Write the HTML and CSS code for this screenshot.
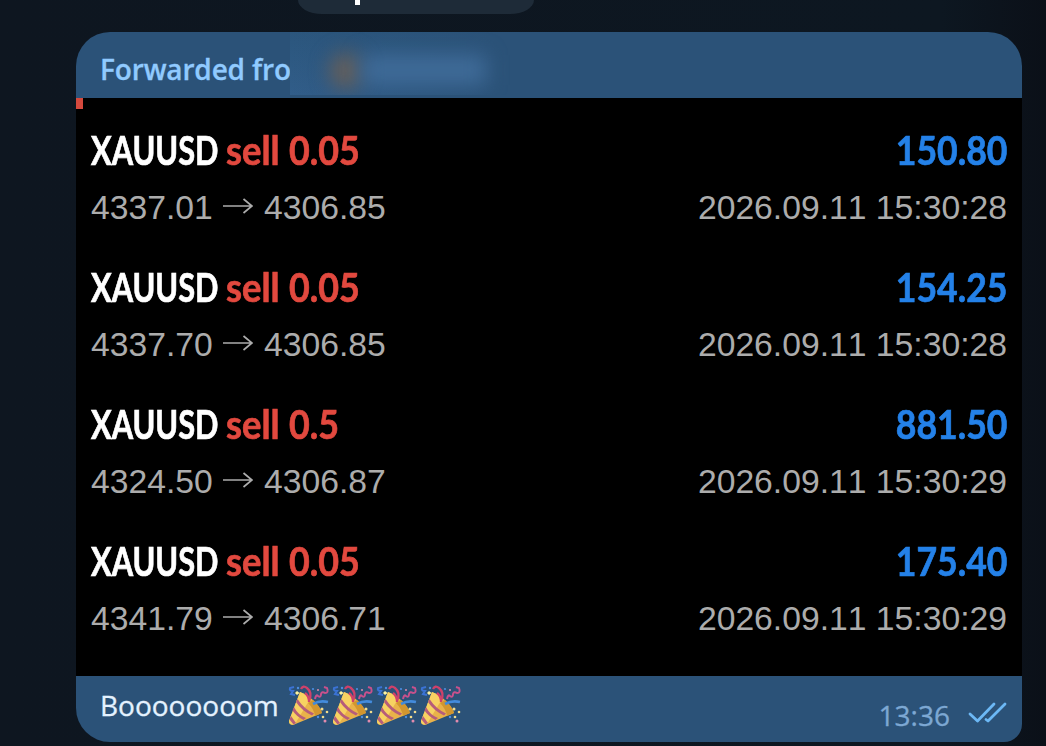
FILE: index.html
```html
<!DOCTYPE html>
<html lang="en">
<head>
    <meta charset="UTF-8">
    <meta name="viewport" content="width=device-width, initial-scale=1.0">
    <title>Chat</title>
    <link rel="stylesheet" href="styles.css">
</head>
<body>
    <!-- shared icons -->
    <svg class="defs" width="0" height="0">
        <symbol id="arrow" viewBox="0 0 30 20">
            <path d="M0 9H28.500M20.500 2L29 9L20.500 16" fill="none" stroke="currentColor" stroke-width="1.700"/>
        </symbol>
        <symbol id="popper" viewBox="0 0 44 44">
            <path d="M12 7Q20 10 26 16Q32 22 34 28L5 40Q1 40 1 36Z" fill="#e9b24a"/>
            <path d="M12 7Q18 9 22 14L7 39Q1 41 1 36Z" fill="#f7d262"/>
            <path d="M25 15Q32 21 34 28L27 31Q26 24 20 18Z" fill="#d2962f"/>
            <path d="M9.500 14Q16 24 26 28.500L24 30.500Q14 26 8 17Z" fill="#b65d7a"/>
            <path d="M6 22Q10 30 18 33L15.500 35Q8 31 4.500 25.500Z" fill="#b65d7a"/>
            <path d="M3 31L8 38L5.500 39.500L1.500 34.500Z" fill="#b65d7a"/>
            <path d="M21 16Q25 8 19 3Q15 0 13 4M21 17Q21 11 17 8" fill="none" stroke="#cf416a" stroke-width="2.300"/>
            <path d="M27 14Q28 9 30 11Q33 13 33 9Q34 6 37 8Q41 8 39 3L36 2" fill="none" stroke="#c8518c" stroke-width="2"/>
            <path d="M25 19Q32 15 40 17" fill="none" stroke="#438bdc" stroke-width="2.600"/>
            <path d="M6 2L2 3Q1 6 5 6L3 9L7 10" fill="none" stroke="#3b73d5" stroke-width="2"/>
            <path d="M9 6L11.500 8L9 10L7 8Z" fill="#fff4a0"/>
            <g fill="#f2dc8c">
                <circle cx="34" cy="24" r="1.500"/>
                <circle cx="39" cy="27" r="1.300"/>
                <circle cx="35" cy="32" r="1.300"/>
            </g>
            <g fill="#e28bad">
                <circle cx="37" cy="36" r="1.500"/>
                <circle cx="30" cy="5" r="1"/>
            </g>
            <g fill="#4c8de0">
                <circle cx="30" cy="32" r="1.200"/>
                <circle cx="10" cy="3" r="1.200"/>
                <circle cx="25" cy="4" r="1.100"/>
            </g>
        </symbol>
    </svg>

    <div class="chat">
        <div class="date-pill"><span class="date-tail"></span></div>

        <div class="message">
            <div class="forwarded">
                <span class="forwarded-label">Forwarded fro</span>
                <div class="hidden-name">
                    <div class="blur-avatar"></div>
                    <div class="blur-name"></div>
                </div>
            </div>

            <div class="trades">
                <div class="marker"></div>
                <div class="trade">
                    <div class="row top">
                        <div class="order"><span class="symbol">XAUUSD</span><span class="side">sell</span><span class="lot">0.05</span></div>
                        <span class="profit">150.80</span>
                    </div>
                    <div class="row bottom">
                        <div class="prices"><span class="open">4337.01</span><svg class="arrow"><use href="#arrow"/></svg><span>4306.85</span></div>
                        <span class="date">2026.09.11 15:30:28</span>
                    </div>
                </div>
                <div class="trade">
                    <div class="row top">
                        <div class="order"><span class="symbol">XAUUSD</span><span class="side">sell</span><span class="lot">0.05</span></div>
                        <span class="profit">154.25</span>
                    </div>
                    <div class="row bottom">
                        <div class="prices"><span class="open">4337.70</span><svg class="arrow"><use href="#arrow"/></svg><span>4306.85</span></div>
                        <span class="date">2026.09.11 15:30:28</span>
                    </div>
                </div>
                <div class="trade">
                    <div class="row top">
                        <div class="order"><span class="symbol">XAUUSD</span><span class="side">sell</span><span class="lot">0.5</span></div>
                        <span class="profit">881.50</span>
                    </div>
                    <div class="row bottom">
                        <div class="prices"><span class="open">4324.50</span><svg class="arrow"><use href="#arrow"/></svg><span>4306.87</span></div>
                        <span class="date">2026.09.11 15:30:29</span>
                    </div>
                </div>
                <div class="trade">
                    <div class="row top">
                        <div class="order"><span class="symbol">XAUUSD</span><span class="side">sell</span><span class="lot">0.05</span></div>
                        <span class="profit">175.40</span>
                    </div>
                    <div class="row bottom">
                        <div class="prices"><span class="open">4341.79</span><svg class="arrow"><use href="#arrow"/></svg><span>4306.71</span></div>
                        <span class="date">2026.09.11 15:30:29</span>
                    </div>
                </div>
            </div>

            <div class="caption">
                <span class="caption-text">Boooooooom</span>
                <div class="emojis">
                    <svg><use href="#popper"/></svg>
                    <svg><use href="#popper"/></svg>
                    <svg><use href="#popper"/></svg>
                    <svg><use href="#popper"/></svg>
                </div>
                <div class="status">
                    <span>13:36</span>
                    <svg class="checks" viewBox="0 0 40 24">
                        <path d="M2 13L9.500 20L26 3M18 18.500L20 20L37 3" fill="none" stroke="#6cb8f5" stroke-width="2.800" stroke-linecap="round" stroke-linejoin="round"/>
                    </svg>
                </div>
            </div>
        </div>
    </div>
</body>
</html>
```

FILE: styles.css
```css
body {
    margin: 0;
    background-color: #0e1620;
    font-family: "Open Sans", "Noto Sans", sans-serif;
}
.defs {
    display: block;
}
.chat {
    height: 746px;
    overflow: hidden;
    background: linear-gradient(90deg, #0e1620 0, #0d1721 90%, #0b1018 100%);
}
.date-pill {
    width: 236px;
    height: 14px;
    margin-left: 298px;
    background-color: #1e2b38;
    border-radius: 0 0 24px 24px / 0 0 14px 14px;
}
.date-tail {
    display: block;
    width: 5px;
    height: 5px;
    margin-left: 57px;
    background-color: #fff;
}
.message {
    width: 946px;
    height: 710px;
    margin: 18px 0 0 76px;
    background-color: #2b5278;
    border-radius: 34px 34px 18px 34px;
    overflow: hidden;
}
.forwarded {
    display: flex;
    height: 66px;
    padding-left: 24px;
}
.forwarded-label {
    width: 190px;
    padding-top: 18px;
    white-space: nowrap;
    font-size: 28px;
    font-weight: 600;
    line-height: 38px;
    letter-spacing: -0.15px;
    color: #90caff;
    -webkit-text-stroke: 0.3px #90caff;
}
.hidden-name {
    display: flex;
    align-items: center;
    width: 240px;
    height: 63px;
    overflow: hidden;
    background: linear-gradient(90deg, #30598a00, #2b5278 85%), linear-gradient(180deg, #2b567d, #315d89);
}
.blur-avatar {
    width: 32px;
    height: 36px;
    margin: 14px 0 0 40px;
    border-radius: 50%;
    background-color: #675f59;
    filter: blur(10px);
}
.blur-name {
    width: 124px;
    height: 30px;
    margin-top: 13px;
    background-color: #3f6b98;
    filter: blur(10px);
}
.trades {
    height: 578px;
    background-color: #000;
}
.marker {
    width: 7px;
    height: 11px;
    background-color: #d5493d;
}
.trade {
    height: 137px;
    padding: 0 15px;
}
.row {
    display: flex;
    justify-content: space-between;
}
.top {
    height: 67px;
    padding-top: 17px;
    box-sizing: border-box;
    font-family: Lato, sans-serif;
    font-size: 40px;
    font-weight: bold;
    line-height: 48px;
    -webkit-text-stroke: 0.7px currentColor;
}
.order {
    display: flex;
}
/* condensed headings */
.symbol,
.side,
.lot,
.profit {
    transform-origin: left;
    white-space: nowrap;
}
.symbol {
    width: 135px;
    color: #fff;
    transform: scaleX(0.77);
}
.side {
    width: 63px;
    color: #e2493f;
    transform: scaleX(0.91);
}
.lot {
    color: #e2493f;
    transform: scaleX(0.895);
}
.profit {
    color: #2481e8;
    transform: scaleX(0.89);
    transform-origin: right;
}
.bottom {
    padding-top: 11px;
    font-family: "Liberation Sans", Arial, sans-serif;
    font-size: 33.7px;
    font-kerning: none;
    line-height: 40px;
    color: #acacac;
}
.prices {
    display: flex;
    align-items: center;
}
.open {
    width: 132px;
}
.arrow {
    width: 30px;
    height: 20px;
    margin-right: 11px;
}
.caption {
    display: flex;
    height: 66px;
    padding: 0 14px 0 24px;
}
.caption-text {
    padding-top: 10px;
    font-size: 28px;
    line-height: 38px;
    color: #e4f2ff;
    -webkit-text-stroke: 0.3px #e4f2ff;
}
.emojis {
    display: flex;
    margin: 9px 0 0 9px;
}
.emojis svg {
    width: 44px;
    height: 44px;
}
.status {
    display: flex;
    margin-left: auto;
    padding-top: 20px;
    font-size: 28px;
    line-height: 38px;
    color: #7da8d3;
    -webkit-text-stroke: 0.3px #7da8d3;
}
.checks {
    width: 40px;
    height: 24px;
    margin: 5px 0 0 18px;
}
```
